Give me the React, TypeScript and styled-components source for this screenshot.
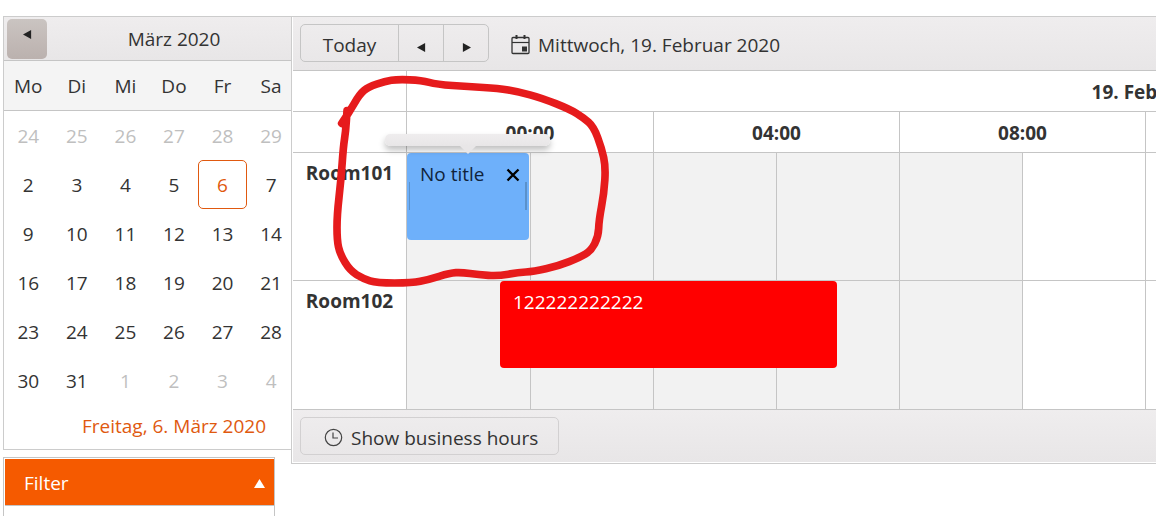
import React from "react";
import styled, { createGlobalStyle, css } from "styled-components";

const line = "#c5c5c5";
const accent = "#e0590f";
const barGradient = "linear-gradient(#efedee, #e8e6e7)";

const GlobalStyle = createGlobalStyle`
  *, *::before, *::after { box-sizing: border-box; }
  body {
    margin: 0;
    background: #fff;
    color: #333;
    font-family: "Open Sans", "Noto Sans", sans-serif;
    font-size: 19px;
    line-height: 24px;
  }
  button { font: inherit; color: inherit; }
  a { color: inherit; text-decoration: none; }
`;

const Page = styled.div`
  display: flex;
  align-items: stretch;
  min-height: 100vh;
  padding: 16px 0 0 3px;
  overflow: hidden;
`;

const Sidebar = styled.aside`
  flex: 0 0 288px;
  min-width: 0;
  display: flex;
  flex-direction: column;
  gap: 7px;
`;

const CalendarPanel = styled.section`
  border: 1px solid #ccc;
  border-right: 0;
  overflow: hidden;
`;

const CalendarBody = styled.div`
  width: 340px;
`;

const CalendarHeader = styled.header`
  display: flex;
  align-items: center;
  height: 44px;
  padding: 0 43px 0 3px;
  border-bottom: 1px solid ${line};
  background: ${barGradient};
`;

const MonthButton = styled.button`
  display: flex;
  justify-content: center;
  width: 40px;
  height: 40px;
  padding: 11px 0 0;
  border: 0;
  border-radius: 5px;
  background: linear-gradient(#cac4c1, #bbb1ae);
`;

const MonthTitle = styled.h2`
  flex: 1;
  margin: 0;
  font-size: 19px;
  font-weight: 400;
  text-align: center;
`;

const MonthTable = styled.table`
  width: 100%;
  table-layout: fixed;
  border-collapse: separate;
  border-spacing: 0;
  text-align: center;

  th, td { padding: 0; }
  thead { background: #f4f4f4; }
  th {
    height: 50px;
    font-weight: 400;
    border-bottom: 1px solid ${line};
  }
`;

const Day = styled.a<{ $muted?: boolean; $today?: boolean }>`
  display: flex;
  align-items: center;
  justify-content: center;
  height: 49px;
  border: 1px solid transparent;
  border-radius: 5px;
  ${(p) => p.$muted && css`color: #bfbfbf;`}
  ${(p) => p.$today && css`color: ${accent}; border-color: ${accent};`}
`;

const CalendarFooter = styled.footer`
  height: 44px;
  padding-top: 9px;
  text-align: center;
  color: ${accent};
`;

const FilterPanel = styled.section`
  flex: 1;
  width: 272px;
  border: 1px solid ${line};
  border-bottom: 0;
  padding: 1px 0 0 1px;
`;

const FilterHeader = styled.button`
  display: flex;
  align-items: center;
  justify-content: space-between;
  width: 100%;
  height: 47px;
  padding: 2px 9px 0 19px;
  border: 0;
  border-bottom: 1px solid ${line};
  background: #f55a00;
  color: #fff;
`;

const Scheduler = styled.main`
  position: relative;
  flex: 1;
  min-width: 0;
  align-self: flex-start;
  padding: 0 0 1px 1px;
  border: 1px solid #ccc;
  border-right: 0;
`;

const Bar = styled.div<{ $footer?: boolean }>`
  display: flex;
  align-items: center;
  gap: 15px;
  height: ${(p) => (p.$footer ? 53 : 54)}px;
  padding: 0 7px 1px;
  background: ${barGradient};
  border: solid ${line};
  border-width: ${(p) => (p.$footer ? "1px 0 0" : "0 0 1px")};
`;

const ButtonGroup = styled.div`
  display: flex;
  height: 38px;
  border: 1px solid ${line};
  border-radius: 5px;
`;

const GroupButton = styled.button<{ $wide?: boolean }>`
  display: flex;
  align-items: center;
  justify-content: center;
  width: ${(p) => (p.$wide ? 97 : 45)}px;
  padding: ${(p) => (p.$wide ? 4 : 8)}px 0 0;
  border: 0;
  background: none;
  & + & { border-left: 1px solid ${line}; }
`;

const DateButton = styled.button`
  display: flex;
  align-items: center;
  gap: 8px;
  padding: 4px 7px 0;
  border: 0;
  background: none;
  white-space: nowrap;
`;

const HoursButton = styled.button`
  display: flex;
  align-items: center;
  gap: 8px;
  height: 38px;
  padding: 4px 20px 0 23px;
  border: 1px solid #d2d0d1;
  border-radius: 5px;
  background: none;
  white-space: nowrap;
`;

const Viewport = styled.div`
  overflow: hidden;
`;

const TimeTable = styled.table`
  width: 1591px;
  table-layout: fixed;
  border-collapse: separate;
  border-spacing: 0;

  th, td {
    padding: 0;
    border: solid ${line};
    border-width: 0 1px 1px 0;
  }
  th { font-size: 19px; font-weight: 700; }
  thead th, thead td { height: 41px; padding-top: 1px; }
  tbody tr:last-child > * { border-bottom: 0; }
`;

const Col = styled.col<{ $w: number }>`
  width: ${(p) => p.$w}px;
`;

const RoomHeader = styled.th`
  height: 128px;
  vertical-align: top;
  && { padding-top: 8px; }
`;

const Slot = styled.td<{ $off?: boolean }>`
  position: relative;
  height: 128px;
  background: ${(p) => (p.$off ? "#f2f2f2" : "#fff")};
`;

const Event = styled.div<{ $left: number; $width: number; $color: string; $ink: string }>`
  position: absolute;
  z-index: 1;
  top: 0;
  left: ${(p) => p.$left}px;
  width: ${(p) => p.$width}px;
  height: 87px;
  display: flex;
  justify-content: space-between;
  align-items: flex-start;
  padding: 9px 9px 0 13px;
  border-radius: 4px;
  background: ${(p) => p.$color};
  color: ${(p) => p.$ink};
  white-space: nowrap;
`;

const CloseButton = styled.button`
  display: flex;
  align-items: center;
  height: 26px;
  padding: 0;
  border: 0;
  background: none;
`;

const Handle = styled.span<{ $end?: boolean }>`
  position: absolute;
  top: 29px;
  ${(p) => (p.$end ? "right" : "left")}: 2px;
  width: ${(p) => (p.$end ? 2 : 1)}px;
  height: 28px;
  background: #5a91cb;
`;

const Tooltip = styled.div`
  position: absolute;
  z-index: 2;
  top: -19px;
  left: -22px;
  width: 165px;
  height: 12px;
  border-radius: 5px;
  background: linear-gradient(#efedee, #e8e6e7);
  box-shadow: 0 4px 6px rgba(0, 0, 0, 0.25);

  &::after {
    content: "";
    position: absolute;
    top: 12px;
    left: 75px;
    border: 8px solid transparent;
    border-top-color: #e8e6e7;
    border-bottom: 0;
  }
`;

const Annotation = styled.svg`
  position: absolute;
  z-index: 3;
  top: 53px;
  left: 33px;
  pointer-events: none;
`;

const Triangle = ({ dir, size = 9, color = "#222" }: { dir: "left" | "right" | "up"; size?: number; color?: string }) => {
  const d = { left: "M9 0v10L0 5z", right: "M1 0v10l9-5z", up: "M5 1l5 8H0z" }[dir];
  return (
    <svg width={size} height={size} viewBox="0 0 10 10" fill={color} aria-hidden="true">
      <path d={d} />
    </svg>
  );
};

const CalendarIcon = () => (
  <svg width="19" height="20" viewBox="0 0 19 20" fill="none" stroke="#333" aria-hidden="true">
    <rect x="1" y="2.5" width="17" height="16" rx="1" strokeWidth="1.3" />
    <path d="M1 7.5h17" strokeWidth="1.2" />
    <path d="M5.5 0v4M13.5 0v4" strokeWidth="2" />
    <path d="M11 11.5h5v5h-5z" fill="#333" stroke="none" />
  </svg>
);

const ClockIcon = () => (
  <svg width="19" height="19" viewBox="0 0 19 19" fill="none" stroke="#444" strokeWidth="1.2" aria-hidden="true">
    <circle cx="9.5" cy="9.5" r="8.2" />
    <path d="M9 4.5v5.5h5" />
  </svg>
);

const CloseIcon = () => (
  <svg width="14" height="14" viewBox="0 0 14 14" stroke="#000" strokeWidth="2.3" aria-hidden="true">
    <path d="M1.5 1.5l11 11M12.5 1.5l-11 11" />
  </svg>
);

const loop: [number, number][] = [
  [50, 160], [72, 128], [104, 72], [130, 51], [180, 34], [218, 28], [290, 31], [335, 43], [430, 50], [520, 55],
  [580, 65], [650, 84], [735, 118], [775, 143], [806, 170], [830, 235], [842, 290], [837, 370], [822, 450],
  [820, 500], [798, 542], [765, 562], [700, 588], [625, 605], [580, 607], [520, 618], [460, 614], [410, 607],
  [375, 609], [310, 629], [262, 639], [155, 639], [115, 626], [75, 602], [45, 552], [36, 510], [36, 435],
  [48, 330], [55, 230], [62, 185], [66, 122],
];

/* Smooths the hand-drawn stroke by curving through the midpoints of its points. */
const loopPath = loop.reduce((d, [x, y], i) => {
  if (i === 0) return `M${x} ${y}`;
  const next = loop[i + 1];
  return next ? `${d}Q${x} ${y} ${(x + next[0]) / 2} ${(y + next[1]) / 2}` : `${d}L${x} ${y}`;
}, "");

const weekdays = ["Mo", "Di", "Mi", "Do", "Fr", "Sa"];
const weeks = [
  [24, 25, 26, 27, 28, 29],
  [2, 3, 4, 5, 6, 7],
  [9, 10, 11, 12, 13, 14],
  [16, 17, 18, 19, 20, 21],
  [23, 24, 25, 26, 27, 28],
  [30, 31, 1, 2, 3, 4],
];
const isOtherMonth = (week: number, day: number) => (week === 0 && day > 20) || (week === 5 && day < 10);

const slotWidths = [124, ...Array<number>(11).fill(123)];
const hours = ["00:00", "04:00", "08:00", "", "", ""];

const Calendar = () => (
  <CalendarPanel aria-label="Kalender">
    <CalendarBody>
      <CalendarHeader>
        <MonthButton aria-label="Previous month"><Triangle dir="left" /></MonthButton>
        <MonthTitle>März 2020</MonthTitle>
      </CalendarHeader>
      <MonthTable>
        <thead>
          <tr>
            {weekdays.map((d) => <th key={d} scope="col">{d}</th>)}
            <th />
          </tr>
        </thead>
        <tbody>
          {weeks.map((week, w) => (
            <tr key={w}>
              {week.map((day) => (
                <td key={day}>
                  <Day href="#" $muted={isOtherMonth(w, day)} $today={w === 1 && day === 6}>{day}</Day>
                </td>
              ))}
            </tr>
          ))}
        </tbody>
      </MonthTable>
      <CalendarFooter><a href="#">Freitag, 6. März 2020</a></CalendarFooter>
    </CalendarBody>
  </CalendarPanel>
);

const Room = ({ name, children }: { name: string; children: React.ReactNode }) => (
  <tr>
    <RoomHeader scope="row">{name}</RoomHeader>
    {slotWidths.map((_, i) => (
      <Slot key={i} $off={i < 5 || i > 8}>{i === 0 && children}</Slot>
    ))}
  </tr>
);

export default function App() {
  return (
    <>
      <GlobalStyle />
      <Page>
        <Sidebar>
          <Calendar />
          <FilterPanel>
            <FilterHeader aria-expanded="true">
              Filter
              <Triangle dir="up" size={11} color="#fff" />
            </FilterHeader>
          </FilterPanel>
        </Sidebar>
        <Scheduler>
          <Bar>
            <ButtonGroup>
              <GroupButton $wide>Today</GroupButton>
              <GroupButton aria-label="Previous"><Triangle dir="left" /></GroupButton>
              <GroupButton aria-label="Next"><Triangle dir="right" /></GroupButton>
            </ButtonGroup>
            <DateButton><CalendarIcon />Mittwoch, 19. Februar 2020</DateButton>
          </Bar>
          <Viewport>
            <TimeTable>
              <colgroup>
                <Col $w={114} />
                {slotWidths.map((w, i) => <Col key={i} $w={w} />)}
              </colgroup>
              <thead>
                <tr>
                  <td />
                  <th colSpan={12}>19. Februar</th>
                </tr>
                <tr>
                  <td />
                  {hours.map((h, i) => <th key={i} colSpan={2} scope="col">{h}</th>)}
                </tr>
              </thead>
              <tbody>
                <Room name="Room101">
                  <Event $left={0} $width={122} $color="#6eb0fa" $ink="#10233a">
                    No title
                    <CloseButton aria-label="Delete"><CloseIcon /></CloseButton>
                    <Handle />
                    <Handle $end />
                    <Tooltip role="tooltip" />
                  </Event>
                </Room>
                <Room name="Room102">
                  <Event $left={93} $width={337} $color="#ff0000" $ink="#fff">122222222222</Event>
                </Room>
              </tbody>
            </TimeTable>
          </Viewport>
          <Bar $footer>
            <HoursButton><ClockIcon />Show business hours</HoursButton>
          </Bar>
          <Annotation width="300" height="220" viewBox="0 0 900 660" fill="none" stroke="#e61b1c" strokeWidth="23" strokeLinecap="round" strokeLinejoin="round" aria-hidden="true">
            <path d={loopPath} />
          </Annotation>
        </Scheduler>
      </Page>
    </>
  );
}
